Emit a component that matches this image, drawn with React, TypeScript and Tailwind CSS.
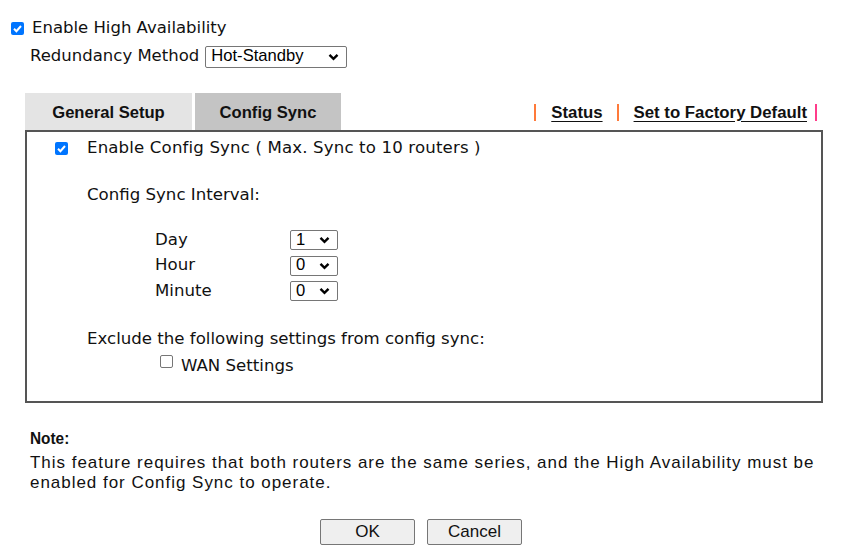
import React from "react";

const Chevron = () => (
  <svg width="11" height="8" viewBox="0 0 11 8" className="absolute right-[7px] top-1/2 -translate-y-1/2">
    <path d="M1.5 1.8 L5.5 5.8 L9.5 1.8" fill="none" stroke="#000" strokeWidth="2.4" />
  </svg>
);

const Sel = ({ v, w, h = 20 }: { v: string; w: number; h?: number }) => (
  <div
    className="relative border border-[#767676] rounded-[2px] bg-white flex items-center pl-[5px] text-black"
    style={{ width: w, height: h, fontFamily: '"Liberation Sans", Arial, sans-serif', fontSize: 16.6 }}
  >
    <span className="leading-none">{v}</span>
    <Chevron />
  </div>
);

const Check = ({ checked }: { checked: boolean }) =>
  checked ? (
    <div className="w-[13px] h-[13px] rounded-[2px] bg-[#0075ff] flex items-center justify-center">
      <svg width="11" height="11" viewBox="0 0 11 11">
        <path d="M2 5.8 L4.4 8.2 L9 3" fill="none" stroke="#fff" strokeWidth="2" />
      </svg>
    </div>
  ) : (
    <div className="w-[13px] h-[13px] rounded-[2px] border border-[#767676] bg-white" />
  );

export default function App() {
  return (
    <div
      className="w-[860px] h-[545px] bg-white text-[#111] relative overflow-hidden"
      style={{ fontFamily: '"DejaVu Sans", Verdana, sans-serif', fontSize: 16.6 }}
    >
      <div className="flex items-center pt-[19px] pl-[11px] h-[38px]">
        <Check checked />
        <span className="ml-[8px] text-[16.5px] leading-none">Enable High Availability</span>
      </div>
      <div className="flex items-center pl-[30px] mt-[7px] h-[22px] pt-[1px]">
        <span className="text-[16.5px] leading-none">Redundancy Method</span>
        <div className="ml-[6px]">
          <Sel v="Hot-Standby" w={142} h={22} />
        </div>
      </div>

      <div className="flex items-stretch mt-[26px] ml-[25px] mr-[38px] h-[37px]">
        <div
          className="w-[167px] bg-[#e4e4e4] flex items-center justify-center font-bold text-[16.6px] pt-[3px]"
          style={{ fontFamily: '"Liberation Sans", Arial, sans-serif' }}
        >
          General Setup
        </div>
        <div
          className="ml-[3px] w-[146px] bg-[#c4c4c4] flex items-center justify-center font-bold text-[16.6px] pt-[3px]"
          style={{ fontFamily: '"Liberation Sans", Arial, sans-serif' }}
        >
          Config Sync
        </div>
        <div
          className="flex-1 flex items-center justify-end font-bold text-[16.8px] pt-[2px]"
          style={{ fontFamily: '"Liberation Sans", Arial, sans-serif' }}
        >
          <span className="w-[2px] h-[17px] bg-[#ff7a3a]" />
          <span className="ml-[15px] underline underline-offset-[3px]">Status</span>
          <span className="ml-[14px] w-[2px] h-[17px] bg-[#ff7a3a]" />
          <span className="ml-[15px] underline underline-offset-[3px]">Set to Factory Default</span>
          <span className="ml-[8px] w-[2px] h-[17px] bg-[#ff3c8a]" />
          <span className="w-[5px]" />
        </div>
      </div>

      <div className="mx-[25px] w-[798px] h-[273px] border-2 border-[#555] relative">
        <div className="flex items-center pl-[28px] pt-[8px]">
          <Check checked />
          <span className="ml-[19px] leading-none tracking-[0.15px]">Enable Config Sync ( Max. Sync to 10 routers )</span>
        </div>
        <div className="pl-[60px] mt-[30px] leading-none">Config Sync Interval:</div>
        <div className="pl-[128px] mt-[27px] grid grid-cols-[135px_auto] gap-y-[5.5px] items-center leading-none w-max">
          <span>Day</span>
          <Sel v="1" w={48} />
          <span>Hour</span>
          <Sel v="0" w={48} />
          <span>Minute</span>
          <Sel v="0" w={48} />
        </div>
        <div className="pl-[60px] mt-[30px] leading-none">Exclude the following settings from config sync:</div>
        <div className="flex items-center pl-[133px] mt-[10px]">
          <div className="-mt-[9px]">
            <Check checked={false} />
          </div>
          <span className="ml-[8px] leading-none">WAN Settings</span>
        </div>
      </div>

      <div
        className="pl-[30px] mt-[26px] leading-[20px]"
        style={{ fontFamily: '"Liberation Sans", Arial, sans-serif' }}
      >
        <div className="font-bold text-[16px]" style={{ transform: "scaleX(0.96)", transformOrigin: "left" }}>Note:</div>
        <div className="mt-[4px] text-[17px] tracking-[0.97px] w-[830px]">
          This feature requires that both routers are the same series, and the High Availability must be
          <br />
          enabled for Config Sync to operate.
        </div>
      </div>

      <div className="flex justify-center gap-[12px] mt-[26px] pr-[18px]" style={{ fontFamily: '"Liberation Sans", Arial, sans-serif' }}>
        <div className="w-[95px] h-[26px] border border-[#767676] rounded-[2px] bg-[#efefef] flex items-center justify-center text-[17px]">
          OK
        </div>
        <div className="w-[95px] h-[26px] border border-[#767676] rounded-[2px] bg-[#efefef] flex items-center justify-center text-[17px]">
          Cancel
        </div>
      </div>
    </div>
  );
}
